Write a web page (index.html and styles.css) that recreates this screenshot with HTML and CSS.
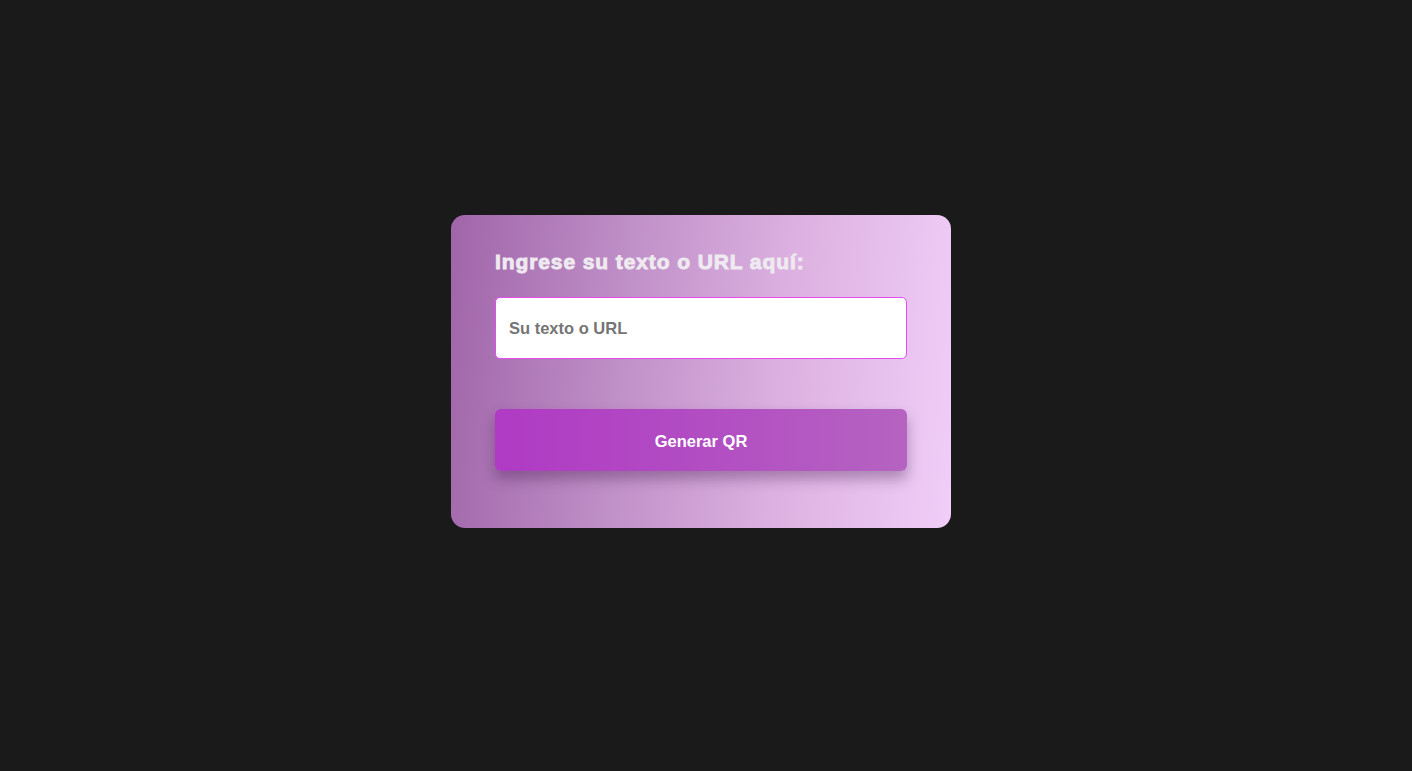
FILE: index.html
```html
<!DOCTYPE html>
<html lang="es">
<head>
<meta charset="utf-8">
<title>Generador QR</title>
<link rel="stylesheet" href="styles.css">
</head>
<body>
<main class="page">
  <section class="card">
    <h2 class="title">Ingrese su texto o URL aquí:</h2>
    <input class="field" type="text" placeholder="Su texto o URL" autofocus>
    <button class="btn" type="button">Generar QR</button>
  </section>
</main>
</body>
</html>
```

FILE: styles.css
```css
html, body {
  margin: 0;
  padding: 0;
  background: #1a1a1a;
}
.page {
  box-sizing: border-box;
  height: 100vh;
  display: flex;
  align-items: center;
  justify-content: center;
  padding: 0 10px 28px 0;
  font-family: "Liberation Sans", Arial, sans-serif;
}
.card {
  box-sizing: border-box;
  width: 500px;
  height: 313px;
  border-radius: 14px;
  padding: 30px 44px 0 44px;
  background: linear-gradient(95deg, #a065a9 0%, #c090c8 35%, #dcb0e0 65%, #f0cef8 100%);
  display: flex;
  flex-direction: column;
}
.title {
  margin: 0;
  font-size: 21px;
  line-height: 34px;
  font-weight: 700;
  letter-spacing: 0.9px;
  color: #eeeaf0;
  -webkit-text-stroke: 0.9px #eeeaf0;
}
.field {
  box-sizing: border-box;
  margin-top: 18px;
  width: 412px;
  height: 62px;
  border: 1px solid #e44cf0;
  border-radius: 5px;
  background: #fff;
  padding: 1px 13px 0 13px;
  font-family: "Liberation Sans", Arial, sans-serif;
  font-size: 16.5px;
  font-weight: 700;
  color: #333;
  outline: none;
  caret-color: #000;
}
.field::placeholder {
  color: #757575;
  opacity: 1;
}
.btn {
  box-sizing: border-box;
  margin-top: 50px;
  width: 412px;
  height: 62px;
  padding: 3px 0 0 0;
  border: none;
  border-radius: 6px;
  background: linear-gradient(90deg, #b03ac4 0%, #b24dc3 50%, #b563c1 100%);
  color: #fff;
  font-family: "Liberation Sans", Arial, sans-serif;
  font-size: 16.5px;
  font-weight: 700;
  box-shadow: 0 8px 14px rgba(60, 20, 70, 0.35);
  cursor: pointer;
}
```
